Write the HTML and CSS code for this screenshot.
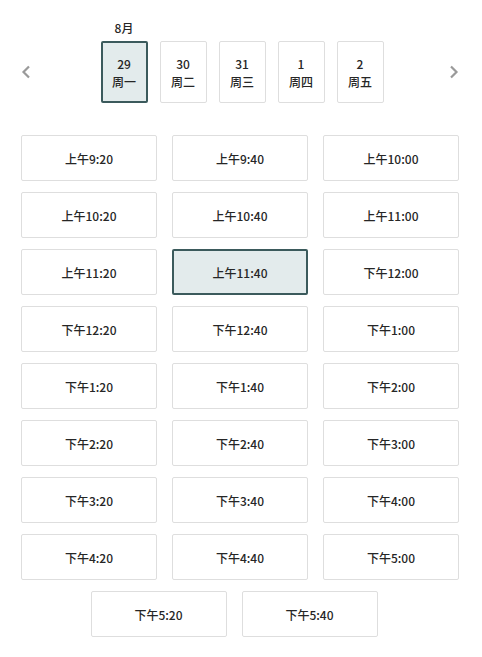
FILE: index.html
```html
<!DOCTYPE html>
<html lang="zh">
<head>
<meta charset="utf-8">
<link rel="stylesheet" href="styles.css">
</head>
<body>
<div class="page">
  <div class="date-nav">
    <button class="arrow arrow-left" aria-label="上一页">
      <svg width="10" height="14" viewBox="0 0 10 14"><path d="M8 1.5 L2.5 7 L8 12.5" fill="none" stroke="#9a9a9a" stroke-width="2.2"/></svg>
    </button>
    <div class="days">
      <div class="day-col">
        <div class="month">8月</div>
        <div class="day selected"><span>29</span><span>周一</span></div>
      </div>
      <div class="day-col">
        <div class="month"></div>
        <div class="day"><span>30</span><span>周二</span></div>
      </div>
      <div class="day-col">
        <div class="month"></div>
        <div class="day"><span>31</span><span>周三</span></div>
      </div>
      <div class="day-col">
        <div class="month"></div>
        <div class="day"><span>1</span><span>周四</span></div>
      </div>
      <div class="day-col">
        <div class="month"></div>
        <div class="day"><span>2</span><span>周五</span></div>
      </div>
    </div>
    <button class="arrow arrow-right" aria-label="下一页">
      <svg width="10" height="14" viewBox="0 0 10 14"><path d="M2 1.5 L7.5 7 L2 12.5" fill="none" stroke="#9a9a9a" stroke-width="2.2"/></svg>
    </button>
  </div>

  <div class="times">
    <button class="slot">上午9:20</button>
    <button class="slot">上午9:40</button>
    <button class="slot">上午10:00</button>
    <button class="slot">上午10:20</button>
    <button class="slot">上午10:40</button>
    <button class="slot">上午11:00</button>
    <button class="slot">上午11:20</button>
    <button class="slot selected">上午11:40</button>
    <button class="slot">下午12:00</button>
    <button class="slot">下午12:20</button>
    <button class="slot">下午12:40</button>
    <button class="slot">下午1:00</button>
    <button class="slot">下午1:20</button>
    <button class="slot">下午1:40</button>
    <button class="slot">下午2:00</button>
    <button class="slot">下午2:20</button>
    <button class="slot">下午2:40</button>
    <button class="slot">下午3:00</button>
    <button class="slot">下午3:20</button>
    <button class="slot">下午3:40</button>
    <button class="slot">下午4:00</button>
    <button class="slot">下午4:20</button>
    <button class="slot">下午4:40</button>
    <button class="slot">下午5:00</button>
  </div>
  <div class="times-last">
    <button class="slot">下午5:20</button>
    <button class="slot">下午5:40</button>
  </div>
</div>
</body>
</html>
```

FILE: styles.css
```css
* { box-sizing: border-box; }
html, body { margin: 0; padding: 0; background: #fff; }
body {
  font-family: "Noto Sans CJK SC", "Noto Sans", sans-serif;
  color: #262626;
  font-size: 12px;
  font-weight: 500;
}
.page {
  width: 482px;
  padding-top: 18px;
}
.date-nav {
  display: grid;
  grid-template-columns: 1fr auto 1fr;
  align-items: end;
  padding: 0 23px 0 21px;
}
.arrow {
  border: none;
  background: none;
  padding: 0;
  height: 62px;
  display: flex;
  align-items: center;
  cursor: pointer;
}
.arrow-left { justify-self: start; }
.arrow-right { justify-self: end; }
.days {
  display: flex;
  gap: 12px;
  padding-left: 4px;
}
.day-col {
  display: flex;
  flex-direction: column;
  align-items: center;
}
.month {
  height: 20px;
  line-height: 20px;
  margin-bottom: 3px;
  font-size: 12px;
}
.day {
  width: 47px;
  height: 62px;
  border: 1px solid #dedede;
  border-radius: 2px;
  display: flex;
  flex-direction: column;
  align-items: center;
  justify-content: center;
  line-height: 18px;
  font-size: 12px;
  padding-top: 1px;
}
.day.selected {
  background: #e3ebec;
  border: 2px solid #3b5a5c;
}
.times {
  margin: 32px 23px 0 21px;
  display: grid;
  grid-template-columns: repeat(3, 136px);
  column-gap: 15px;
  row-gap: 11px;
}
.times-last {
  margin-top: 11px;
  display: flex;
  justify-content: center;
  gap: 15px;
  padding-right: 14px;
}
.slot {
  width: 136px;
  height: 46px;
  border: 1px solid #dedede;
  border-radius: 2px;
  background: #fff;
  font-family: "Noto Sans CJK SC", "Noto Sans", sans-serif;
  font-size: 12px;
  font-weight: 500;
  color: #262626;
  padding: 0;
  cursor: pointer;
}
.slot.selected {
  background: #e3ebec;
  border: 2px solid #3b5a5c;
}
```
